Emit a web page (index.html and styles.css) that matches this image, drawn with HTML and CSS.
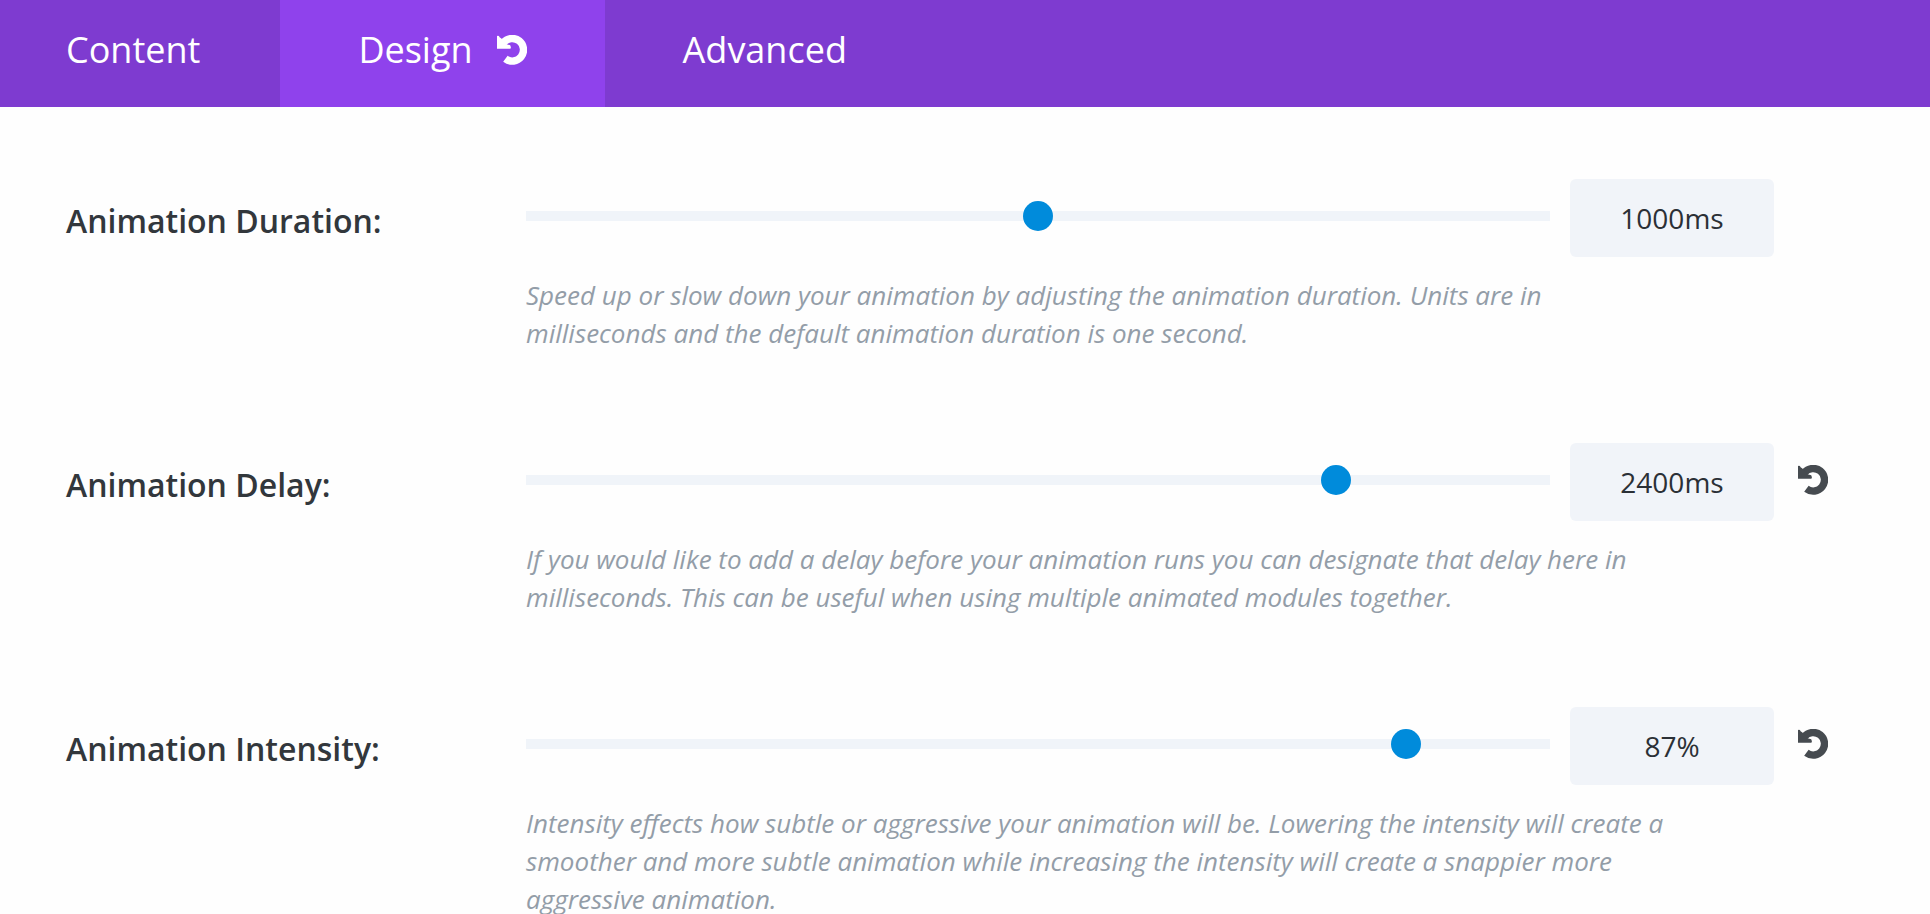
FILE: index.html
```html
<!DOCTYPE html>
<html lang="en">
<head>
<meta charset="utf-8">
<title>Animation Settings</title>
<link rel="stylesheet" href="styles.css">
</head>
<body>
<svg class="sprite" aria-hidden="true">
  <symbol id="undo" viewBox="0 0 30 30">
    <path d="M6.5 7.6A11.3 11.3 0 1 1 8.4 23.8" fill="none" stroke="currentColor" stroke-width="7.4"/>
    <path d="M0 1Q1.8 0.2 2.6 2.2L4.4 3.6L9.5 9.2L13.2 10.2Q14.8 13.8 12.8 13.8H0Z" fill="currentColor"/>
  </symbol>
</svg>
<div class="panel">
  <nav class="tabs">
    <button class="tab" type="button">Content</button>
    <button class="tab tab-active" type="button">Design
      <svg class="icon"><use href="#undo"/></svg>
    </button>
    <button class="tab" type="button">Advanced</button>
  </nav>
  <main class="options">
    <section class="option">
      <label class="option-label" for="duration">Animation Duration:</label>
      <div class="option-body">
        <div class="controls">
          <input class="slider" id="duration" type="range" min="0" max="2000" value="1000">
          <input class="value" type="text" value="1000ms" aria-label="Animation Duration value">
          <span class="reset"></span>
        </div>
        <p class="description">Speed up or slow down your animation by adjusting the animation duration. Units are in milliseconds and the default animation duration is one second.</p>
      </div>
    </section>
    <section class="option">
      <label class="option-label" for="delay">Animation Delay:</label>
      <div class="option-body">
        <div class="controls">
          <input class="slider" id="delay" type="range" min="0" max="3000" value="2400">
          <input class="value" type="text" value="2400ms" aria-label="Animation Delay value">
          <button class="reset" type="button" aria-label="Reset Animation Delay"><svg class="icon"><use href="#undo"/></svg></button>
        </div>
        <p class="description">If you would like to add a delay before your animation runs you can designate that delay here in milliseconds. This can be useful when using multiple animated modules together.</p>
      </div>
    </section>
    <section class="option">
      <label class="option-label" for="intensity">Animation Intensity:</label>
      <div class="option-body">
        <div class="controls">
          <input class="slider" id="intensity" type="range" min="0" max="100" value="87">
          <input class="value" type="text" value="87%" aria-label="Animation Intensity value">
          <button class="reset" type="button" aria-label="Reset Animation Intensity"><svg class="icon"><use href="#undo"/></svg></button>
        </div>
        <p class="description">Intensity effects how subtle or aggressive your animation will be. Lowering the intensity will create a smoother and more subtle animation while increasing the intensity will create a snappier more aggressive animation.</p>
      </div>
    </section>
  </main>
</div>
</body>
</html>
```
FILE: styles.css
```css
* {
  box-sizing: border-box;
}

body {
  margin: 0;
  background: #fefefe;
  color: #32373c;
  font-family: "Open Sans", "Noto Sans", sans-serif;
}

button,
input {
  margin: 0;
  border: 0;
  font-family: inherit;
}

.sprite {
  display: none;
}

.panel {
  display: flex;
  flex-direction: column;
  height: 100vh;
}

.tabs {
  display: flex;
  flex: none;
  height: 107px;
  background: #7e3bd0;
}

.tab {
  display: flex;
  align-items: center;
  gap: 24px;
  padding: 0 78px 8px;
  background: transparent;
  color: #fff;
  font-size: 36px;
}

.tab:first-child {
  padding-right: 80px;
  padding-left: 66px;
}

.tab-active {
  background: #8f42ec;
}

.icon {
  display: block;
  flex: none;
  width: 30px;
  height: 30px;
}

.options {
  display: flex;
  flex: 1;
  flex-direction: column;
  gap: 91px;
  min-height: 0;
  padding: 72px 102px 0 66px;
  overflow-y: auto;
  scrollbar-width: none;
}

.option {
  display: grid;
  flex: none;
  grid-template-columns: 460px 1fr;
}

.option-label {
  padding-top: 21px;
  font-size: 32px;
  font-weight: 600;
  line-height: 42px;
}

.controls {
  display: flex;
  align-items: flex-start;
}

.slider {
  flex: 1;
  min-width: 0;
  height: 74px;
  appearance: none;
  background: transparent;
}

.slider::-webkit-slider-runnable-track {
  height: 10px;
  background: #f0f4f9;
}

.slider::-webkit-slider-thumb {
  width: 30px;
  height: 30px;
  margin-top: -10px;
  appearance: none;
  border-radius: 50%;
  background: #008bdb;
}

.value {
  width: 204px;
  height: 78px;
  margin: 0 24px 0 20px;
  padding: 0;
  border-radius: 6px;
  background: #f1f4f9;
  color: #2b3036;
  font-size: 28px;
  text-align: center;
}

.reset {
  display: flex;
  align-items: center;
  width: 30px;
  height: 74px;
  padding: 0;
  background: transparent;
  color: #464b50;
}

.description {
  max-width: 1140px;
  margin: 19px 0 0;
  color: #939da8;
  font-size: 26px;
  font-style: italic;
  line-height: 38px;
}
```
